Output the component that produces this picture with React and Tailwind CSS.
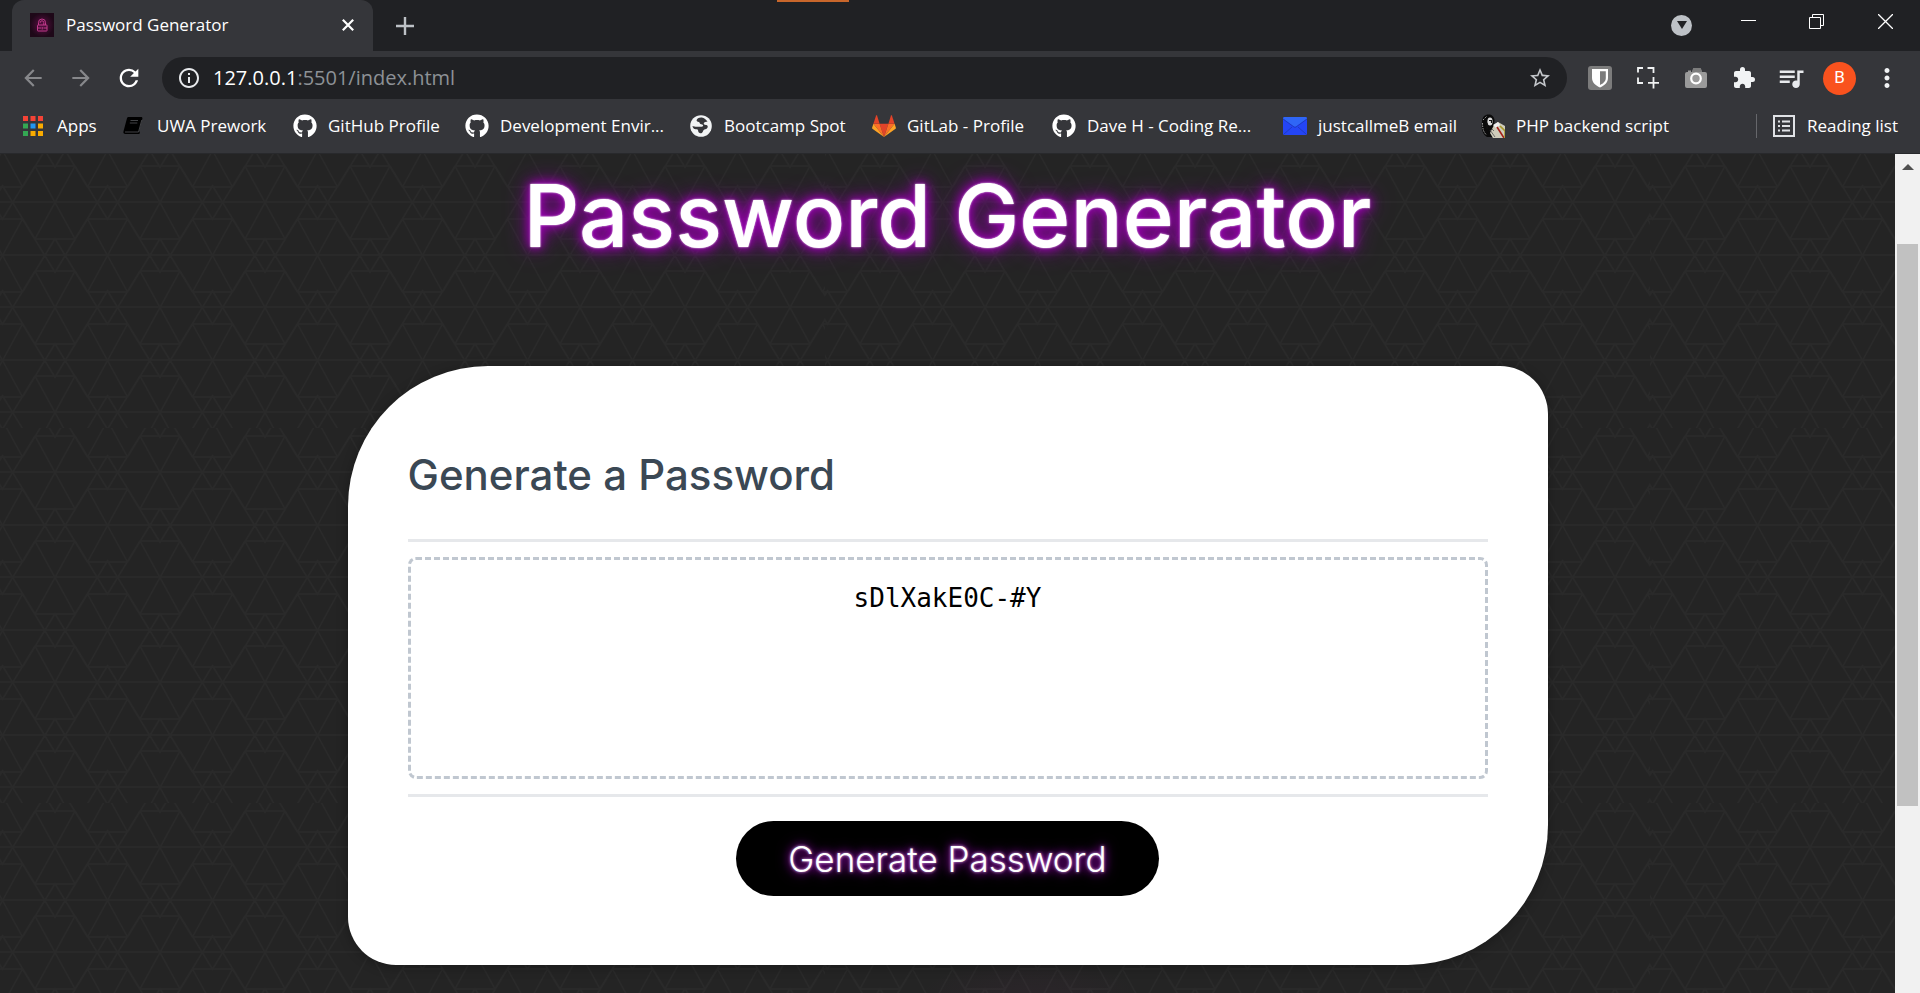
import React from "react";
import { FaGithub } from "react-icons/fa";
import { MdArrowBack, MdArrowForward, MdRefresh, MdInfoOutline, MdStarBorder, MdExtension, MdQueueMusic, MdMoreVert } from "react-icons/md";

const motif = (x, y) =>
  [
    [-20, -36, 20, -36],
    [-20, 37, 20, 37],
    [-20, -36, 20, 37],
    [20, -36, -20, 37],
    [20, -36, 53, 18],
    [-20, -36, -53, 18],
    [20, 37, 53, -17],
    [-20, 37, -53, -17],
    [-53, 0, 53, 0],
  ]
    .map(([a, b, c, d]) => `M${a + x} ${b + y}L${c + x} ${d + y}`)
    .join("");

const hubs = [];
for (const x of [0, 105]) for (const y of [0, 105]) hubs.push(motif(x, y));
hubs.push(motif(52.5, 53));
const cellPath = hubs.join("");

function Backdrop() {
  return (
    <svg className="absolute inset-0 h-full w-full" aria-hidden="true">
      <defs>
        <pattern id="cell" width="105" height="105" patternTransform="translate(55 44)" patternUnits="userSpaceOnUse">
          <path d={cellPath} stroke="#2a2a2a" strokeWidth="1.5" fill="none" />
        </pattern>
        <pattern id="tile" width="825" height="375" patternTransform="translate(0 -101)" patternUnits="userSpaceOnUse">
          <rect width="825" height="375" fill="#242424" />
          <rect width="825" height="375" fill="url(#cell)" />
        </pattern>
        <radialGradient id="blush">
          <stop offset="0" stopColor="#c040a0" stopOpacity="0.06" />
          <stop offset="1" stopColor="#c040a0" stopOpacity="0" />
        </radialGradient>
      </defs>
      <rect width="100%" height="100%" fill="url(#tile)" />
      <ellipse cx="1030" cy="860" rx="120" ry="60" fill="url(#blush)" />
    </svg>
  );
}

function LockIcon() {
  return (
    <svg viewBox="0 0 24 24" className="size-6 shrink-0" aria-hidden="true">
      <defs>
        <radialGradient id="lockGlow">
          <stop offset="0" stopColor="#5a1044" />
          <stop offset="1" stopColor="#1e0818" />
        </radialGradient>
      </defs>
      <rect width="24" height="24" fill="url(#lockGlow)" />
      <g fill="none" stroke="#c23a8c" strokeWidth="1">
        <path d="M8.5 12V9.500a3.500 3.500 0 0 1 7 0V12" />
        <path d="M10.200 10V9.600a1.800 1.800 0 0 1 3.600 0V12" />
        <rect x="7.500" y="12" width="9.500" height="6" rx="0.500" />
        <path d="M7.500 15H11M13.500 15H17M12.200 14v2.500" />
      </g>
    </svg>
  );
}

function AppsIcon() {
  const colors = ["#f44336", "#f44336", "#f44336", "#34a853", "#2196f3", "#f9ab00", "#34a853", "#f9ab00", "#f9ab00"];
  return (
    <svg viewBox="0 0 20 20" className="size-5 shrink-0" aria-hidden="true">
      {colors.map((c, i) => (
        <rect key={i} x={(i % 3) * 7.5} y={Math.floor(i / 3) * 7.5} width="5" height="5" fill={c} />
      ))}
    </svg>
  );
}

function BookIcon() {
  return (
    <svg viewBox="0 0 20 20" className="size-5 shrink-0" aria-hidden="true">
      <path d="M5.500 1H18c1 0 1.700.6 1.400 1.600L16 15.500h1l-.6 2.500H2.500C.8 18 0 17 .5 15.200L4 2.200C4.300 1.300 4.800 1 5.500 1Z" fill="#000" />
      <path d="M7.500 4.500h7.500M6.800 7h7.500M2 16h13.500L18.800 4" stroke="#4a4b4e" strokeWidth="0.900" fill="none" />
    </svg>
  );
}

function GlobeIcon() {
  return (
    <svg viewBox="0 0 22 22" className="w-[22px] shrink-0" aria-hidden="true">
      <circle cx="11" cy="11" r="10.800" fill="#f1f3f4" />
      <path d="M11.800 2.400C9 2.200 6.800 3.500 6.600 5.200c-.1 1.300 1.200 1.500 2.200 1.700 1 .3.800 1.500 1.700 2 1 .5 2.300.3 2.600 1.300.3 1.100-1.200 1.500-2.200 1.500H5.500c-1 0-1.900-.6-3-.7.200 1.300.8 2.500 2 3 1 .4 2.200-.2 3.100.5.900.8.300 2.200 1.200 3 .9.900 2.100.9 3 .4 1.300-.7 1-2.100 1.900-3 .8-.8 2.200-.7 3.200-1.500.9-.8 1.200-2 .4-2.900-.9-.9-2.100-.3-3.100-1-.8-.6-.4-1.800.4-2.300.9-.5 1.900 0 2.900-.6-1.300-2.100-3.300-3.900-5.700-4.200Z" fill="#35363a" />
    </svg>
  );
}

function GitlabIcon() {
  return (
    <svg viewBox="0 0 24 22" className="w-6 shrink-0" aria-hidden="true">
      <path d="M12 22 16.400 8.700H7.600Z" fill="#e24329" />
      <path d="M12 22 7.600 8.700H1.400Z" fill="#fc6d26" />
      <path d="M1.400 8.700.1 12.700c-.1.400 0 .8.300 1L12 22Z" fill="#fca326" />
      <path d="M1.400 8.700h6.200L5 .6c-.2-.4-.7-.4-.9 0Z" fill="#e24329" />
      <path d="M12 22 16.400 8.700h6.200Z" fill="#fc6d26" />
      <path d="m22.600 8.700 1.300 4c.1.400 0 .8-.3 1L12 22Z" fill="#fca326" />
      <path d="M22.600 8.700h-6.200L19 .6c.2-.4.7-.4.9 0Z" fill="#e24329" />
    </svg>
  );
}

function MailIcon() {
  return (
    <svg viewBox="0 0 24 18" className="w-6 shrink-0" aria-hidden="true">
      <rect width="24" height="18" rx="1.500" fill="#2445f5" />
      <path d="M0 1.500Q0 0 1.500 0h21Q24 0 24 1.500L13 9.500q-1 .7-2 0Z" fill="#2f66f6" />
      <path d="m0 2 11 8q1 .7 2 0l11-8M1 17l8-7M23 17l-8-7" fill="none" stroke="#1c37b8" strokeWidth="0.800" />
    </svg>
  );
}

function ScriptIcon() {
  return (
    <svg viewBox="0 0 24 24" className="size-6 shrink-0" aria-hidden="true">
      <path d="M5 1c4-1.500 8 .5 8.500 5L12 23H6C1 20 0 14 1 8c0-3 1-6 4-7Z" fill="#0a0a0a" />
      <path d="M1.500 9c0 6 1 9 4 12M2 6l4-4" stroke="#aaa" strokeWidth="0.900" fill="none" strokeDasharray="1.500 1" />
      <ellipse cx="9" cy="7.500" rx="2.600" ry="4" fill="#ddd" />
      <path d="M8 6.500h2.500v2.500M6 9v6" stroke="#111" strokeWidth="1.200" fill="none" />
      <path d="m13 11 4-3 7 4v12H12l-3-5Z" fill="#cfccba" />
      <path d="m12 11 5-3 2 3-4 3Z" fill="#eee" />
      <path d="m9 16 5 7M11 15l2 2" stroke="#555" strokeWidth="0.800" />
      <path d="m16 13 7 11" stroke="#a32018" strokeWidth="1.600" />
      <path d="m19 12 5 5v7" stroke="#a89a2c" strokeWidth="1.600" fill="none" />
    </svg>
  );
}

function ShieldIcon() {
  return (
    <svg viewBox="0 0 24 24" className="size-6" aria-hidden="true">
      <rect width="24" height="24" rx="3" fill="#7c7c7c" />
      <path d="M4 3h16v9c0 4.500-3.500 7.500-8 9.500C7.500 19.500 4 16.500 4 12Z" fill="#fff" />
      <path d="M12 5.200h5.800V12c0 3.200-2.500 5.300-5.800 7Z" fill="#7c7c7c" />
    </svg>
  );
}

function CaptureIcon() {
  return (
    <svg viewBox="0 0 22 22" className="w-[22px]" fill="none" stroke="#f1f3f4" strokeWidth="1.800" aria-hidden="true">
      <path d="M1 5.500V1h5M10.500 1h6v5M1 10.500V16h5M16.500 10v11.500M11 15.800h11" />
    </svg>
  );
}

function CameraIcon() {
  return (
    <svg viewBox="0 0 22 20" className="w-[22px]" aria-hidden="true">
      <path d="M2 4h1V2.500h3V4h1l1-3q.3-1 1.300-1h5.400q1 0 1.300 1l1 3H20q2 0 2 2v12q0 2-2 2H2q-2 0-2-2V6q0-2 2-2Z" fill="#9a9a9a" />
      <path d="m7 4 1-3q.3-1 1.300-1h5.400q1 0 1.300 1l1 3Z" fill="#7d7d7d" />
      <circle cx="11" cy="10.500" r="4.800" fill="#9a9a9a" stroke="#fff" strokeWidth="2.200" />
    </svg>
  );
}

function ReadingListIcon() {
  return (
    <svg viewBox="0 0 22 22" className="w-[22px] shrink-0" fill="none" stroke="#dfe1e5" strokeWidth="2" aria-hidden="true">
      <rect x="1" y="1" width="20" height="20" />
      <path d="M5 6.500h2M9 6.500h8M5 11h2M9 11h8M5 15.500h2M9 15.500h8" />
    </svg>
  );
}

const github = <FaGithub className="size-6 shrink-0 text-white" />;

const bookmarks = [
  { label: "Apps", icon: <AppsIcon />, gap: "gap-[14px] w-[100px]" },
  { label: "UWA Prework", icon: <BookIcon />, gap: "gap-[14px] w-[170px]" },
  { label: "GitHub Profile", icon: github, gap: "gap-[11px] w-[172px]" },
  { label: "Development Envir...", icon: github, gap: "gap-[11px] w-[225px]" },
  { label: "Bootcamp Spot", icon: <GlobeIcon />, gap: "gap-3 w-[182px]" },
  { label: "GitLab - Profile", icon: <GitlabIcon />, gap: "gap-[11px] w-[180px]" },
  { label: "Dave H - Coding Re...", icon: github, gap: "gap-[11px] w-[231px]" },
  { label: "justcallmeB email", icon: <MailIcon />, gap: "gap-[11px] w-[198px]" },
  { label: "PHP backend script", icon: <ScriptIcon />, gap: "gap-[11px] w-[192px]" },
];

function TabStrip() {
  return (
    <div className="flex h-[51px] bg-[#202124] pl-3">
      <div className="flex w-[361px] shrink-0 items-center rounded-t-xl bg-[#35363a] pr-[19px] pb-[2px] pl-[18px]">
        <LockIcon />
        <span className="ml-3 flex-1 truncate text-[17px] leading-6">Password Generator</span>
        <button aria-label="Close tab">
          <svg viewBox="0 0 12 12" className="w-3" stroke="#fff" strokeWidth="2.200" aria-hidden="true">
            <path d="m.8.8 10.400 10.400M11.200.8.8 11.200" />
          </svg>
        </button>
      </div>
      <button aria-label="New tab" className="ml-[23px]">
        <svg viewBox="0 0 18 18" className="w-[18px]" stroke="#bdc1c6" strokeWidth="2.400" aria-hidden="true">
          <path d="M9 0v18M0 9h18" />
        </svg>
      </button>
      <div className="flex flex-1 justify-center">
        <span className="mr-[460px] h-[2px] w-[72px] bg-[#c8662b]" />
      </div>
      <div className="flex h-[42px] items-center">
        <button aria-label="Search tabs" className="mt-2 mr-[49px] flex size-[21px] items-center justify-center rounded-full bg-[#bdc1c6]">
          <svg viewBox="0 0 10 8" className="w-[10px]" aria-hidden="true">
            <path d="M0 0h10L5 8Z" fill="#202124" />
          </svg>
        </button>
        <button aria-label="Minimize" className="mr-[53px]">
          <svg viewBox="0 0 15 15" className="w-[15px]" stroke="#fff" fill="none" aria-hidden="true">
            <path d="M0 6.500h15" />
          </svg>
        </button>
        <button aria-label="Restore" className="mr-[54px]">
          <svg viewBox="0 0 15 15" className="w-[15px]" stroke="#fff" fill="none" aria-hidden="true">
            <path d="M.5 3.500h11v11H.5ZM3.500 3.500V.5h11v11h-3" />
          </svg>
        </button>
        <button aria-label="Close" className="mr-[27px]">
          <svg viewBox="0 0 15 15" className="w-[15px]" stroke="#fff" strokeWidth="1.300" fill="none" aria-hidden="true">
            <path d="m0 0 15 15M15 0 0 15" />
          </svg>
        </button>
      </div>
    </div>
  );
}

function Toolbar() {
  return (
    <div className="flex items-center pt-[6px] pr-[22px] pl-5">
      <button aria-label="Back" className="text-[#87888b]">
        <MdArrowBack className="size-[26px]" />
      </button>
      <button aria-label="Forward" className="ml-[22px] text-[#87888b]">
        <MdArrowForward className="size-[26px]" />
      </button>
      <button aria-label="Reload" className="ml-[21px] text-white">
        <MdRefresh className="size-7" />
      </button>
      <div className="ml-[19px] flex h-[42px] flex-1 items-center rounded-full bg-[#202124] pr-[15px] pl-[15px]">
        <MdInfoOutline className="size-6 text-[#e8eaed]" />
        <a href="#address" className="ml-3 flex-1 text-[20px] leading-6 text-[#8d9196]">
          <span className="text-white">127.0.0.1</span>:5501/index.html
        </a>
        <button aria-label="Bookmark this page" className="text-[#c4c7cb]">
          <MdStarBorder className="size-6" />
        </button>
      </div>
      <div className="ml-[21px] flex items-center">
        <button aria-label="Password manager" className="mr-[25px]"><ShieldIcon /></button>
        <button aria-label="Capture" className="mr-[26px]"><CaptureIcon /></button>
        <button aria-label="Screenshot" className="mr-[25px]"><CameraIcon /></button>
        <button aria-label="Extensions" className="mr-5 text-[#f1f3f4]"><MdExtension className="size-6" /></button>
        <button aria-label="Media controls" className="mr-[17px] text-[#e8eaed]"><MdQueueMusic className="size-[30px]" /></button>
        <button aria-label="Profile" className="mr-4 size-[33px] rounded-full bg-[#f9521e] font-['Roboto',sans-serif] text-[17px]">B</button>
        <button aria-label="Menu" className="-mr-1 text-[#f1f3f4]"><MdMoreVert className="size-[30px]" /></button>
      </div>
    </div>
  );
}

function BookmarkBar() {
  return (
    <nav aria-label="Bookmarks" className="flex h-[54px] items-center pr-[22px] pl-[23px]">
      {bookmarks.map((b) => (
        <a key={b.label} href="#bookmark" className={`flex shrink-0 items-center text-[17px] leading-6 whitespace-nowrap ${b.gap}`}>
          {b.icon}
          {b.label}
        </a>
      ))}
      <a href="#reading" className="ml-auto flex items-center text-[17px] leading-6 whitespace-nowrap">
        <span className="mr-4 h-6 w-px bg-[#66676b]" />
        <ReadingListIcon />
        <span className="ml-3">Reading list</span>
      </a>
    </nav>
  );
}

export default function App() {
  return (
    <div className="flex min-h-screen flex-col bg-[#242424]">
      <header className="border-b border-[#28292c] bg-[#35363a] font-['Open_Sans','Noto_Sans',sans-serif] text-white">
        <TabStrip />
        <Toolbar />
        <BookmarkBar />
      </header>
      <div className="flex flex-1 font-['Inter',sans-serif]">
        <main className="relative flex-1 overflow-hidden">
          <Backdrop />
          <div className="relative flex flex-col items-center px-6">
            <h1 className="mt-[10px] text-center text-[87px] leading-[104px] font-medium text-white [text-shadow:0_0_2px_#fff,0_0_10px_#a000c0,0_0_14px_#90009a,0_0_24px_#80009a]">
              Password Generator
            </h1>
            <section className="mt-[98px] w-full max-w-[1200px] rounded-tl-[140px] rounded-tr-[48px] rounded-br-[140px] rounded-bl-[48px] bg-white px-[60px] pt-20 pb-[69px] shadow-[0_2px_12px_rgba(0,0,0,0.3)]">
              <h2 className="text-[42px] leading-[58px] font-medium text-[#3b4854]">
                <label htmlFor="password">Generate a Password</label>
              </h2>
              <div className="mt-[35px] border-y-[3px] border-[#e6e8eb] py-[15px]">
                <textarea
                  id="password"
                  readOnly
                  defaultValue="sDlXakE0C-#Y"
                  className="block h-[222px] w-full resize-none rounded-lg border-[3px] border-dashed border-[#c0c7d0] bg-white px-6 py-[18px] text-center font-['DejaVu_Sans_Mono',monospace] text-[26px] leading-10 text-black outline-none"
                />
              </div>
              <div className="mt-6 flex justify-center">
                <button className="h-[75px] rounded-full bg-black px-[52px] text-[35px] leading-10 font-light text-white [text-shadow:0_0_3px_#e0b0f0,0_0_8px_#a000c0,0_0_14px_#80009a]">
                  Generate Password
                </button>
              </div>
            </section>
          </div>
        </main>
        <div className="flex w-[25px] flex-col items-center bg-[#f1f1f1] pt-[10px]" aria-hidden="true">
          <svg viewBox="0 0 12 6" className="w-3">
            <path d="M0 6 6 0l6 6Z" fill="#505050" />
          </svg>
          <span className="mt-[74px] h-[562px] w-[21px] bg-[#c1c1c1]" />
        </div>
      </div>
    </div>
  );
}
